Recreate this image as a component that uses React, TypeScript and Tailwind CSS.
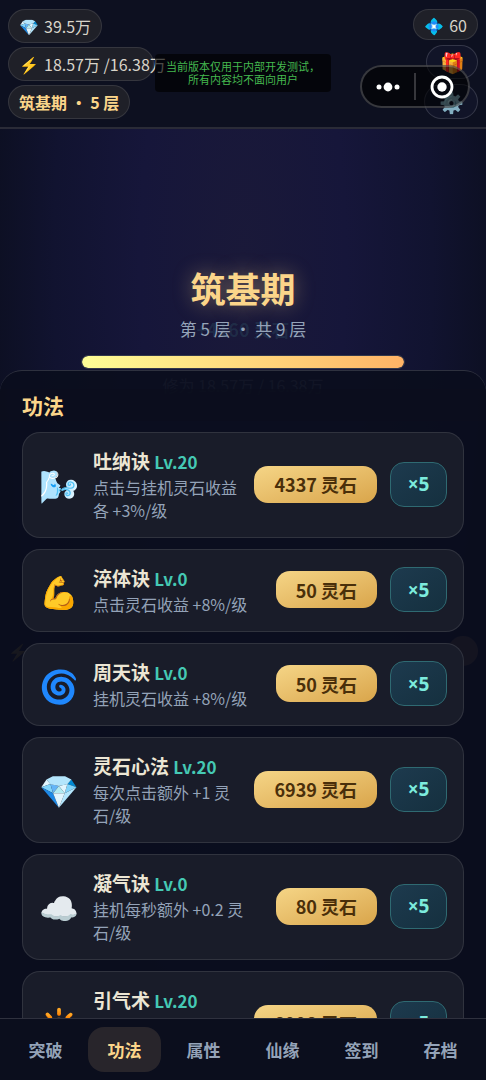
import type { ReactNode } from "react";

interface Skill {
  icon: string;
  name: string;
  level: number;
  desc: string;
  cost: number;
}

const skills: Skill[] = [
  { icon: "🌬️", name: "吐纳诀", level: 20, desc: "点击与挂机灵石收益各 +3%/级", cost: 4337 },
  { icon: "💪", name: "淬体诀", level: 0, desc: "点击灵石收益 +8%/级", cost: 50 },
  { icon: "🌀", name: "周天诀", level: 0, desc: "挂机灵石收益 +8%/级", cost: 50 },
  { icon: "💎", name: "灵石心法", level: 20, desc: "每次点击额外 +1 灵石/级", cost: 6939 },
  { icon: "☁️", name: "凝气诀", level: 0, desc: "挂机每秒额外 +0.2 灵石/级", cost: 80 },
  { icon: "🔆", name: "引气术", level: 20, desc: "挂机每秒额外 +1 灵石/级", cost: 8998 },
];

const tabs = ["突破", "功法", "属性", "仙缘", "签到", "存档"];

const Pill = ({ children, className = "" }: { children: ReactNode; className?: string }) => (
  <div
    className={`flex items-center gap-[5px] rounded-full border border-white/10 bg-[#1f2028] px-[10px] text-[16px] whitespace-nowrap ${className}`}
  >
    {children}
  </div>
);

const Header = () => (
  <header className="relative flex shrink-0 items-start justify-between border-b-2 border-[#2a2b37] bg-[#0d1020] px-2 pt-[9px] pb-2">
    <div className="flex flex-col items-start gap-1">
      <Pill className="h-[34px]">
        <span>💎</span>
        <span>39.5万</span>
      </Pill>
      {/* the cap runs past the end of its pill */}
      <Pill className="h-[34px] w-[146px]">
        <span>⚡</span>
        <span>18.57万 /16.38万</span>
      </Pill>
      <Pill className="h-[34px] font-bold text-[#fbd58a]">筑基期 · 5 层</Pill>
    </div>

    <div className="flex flex-col items-end gap-[5px]">
      <Pill className="h-[31px]">
        <span>💠</span>
        <span>60</span>
      </Pill>
      <button
        type="button"
        aria-label="礼包"
        className="flex h-[34px] w-[52px] items-center justify-center rounded-full border border-white/15 bg-[#111428] text-[20px] leading-none"
      >
        🎁
      </button>
      <button
        type="button"
        aria-label="设置"
        className="flex h-[35px] w-[54px] items-center justify-center rounded-full border border-white/15 bg-[#111428] text-[20px] leading-none"
      >
        ⚙️
      </button>
    </div>

    <p className="absolute top-[54px] left-[155px] w-[176px] rounded bg-black/65 py-[6px] text-center text-[11px] leading-[13px] text-[#45b84f]">
      当前版本仅用于内部开发测试，
      <br />
      所有内容均不面向用户
    </p>

    {/* host app capsule */}
    <div className="absolute top-[65px] right-[16px] flex h-[43px] w-[110px] items-center rounded-full border-2 border-white/20 bg-black/60">
      <button type="button" aria-label="更多" className="flex flex-1 justify-center">
        <svg width="24" height="10" viewBox="0 0 24 10" fill="#fff">
          <circle cx="3" cy="5" r="2.5" />
          <circle cx="12" cy="5" r="4.4" />
          <circle cx="21" cy="5" r="2.5" />
        </svg>
      </button>
      <span className="h-[27px] w-[2px] bg-white/20" />
      <button type="button" aria-label="关闭" className="flex flex-1 justify-center">
        <svg width="24" height="24" viewBox="0 0 24 24">
          <circle cx="12" cy="12" r="10" fill="none" stroke="#fff" strokeWidth="2.8" />
          <circle cx="12" cy="12" r="4.7" fill="#fff" />
        </svg>
      </button>
    </div>
  </header>
);

const Realm = () => (
  <section className="flex h-full flex-col items-center bg-[radial-gradient(ellipse_at_50%_15%,#1a1939_0%,#16163a_30%,#111330_55%,#0b0e1d_80%)] pt-[134px]">
    <h1 className="text-[35px] leading-[50px] font-bold text-[#fbd58a] [text-shadow:0_0_20px_rgba(251,213,138,0.4)]">
      筑基期
    </h1>
    <div className="relative mt-[3px] text-[17px] leading-[26px] text-[#94a3b8]">
      <span className="absolute inset-x-0 text-center text-[18px] font-bold text-[#5eead4]/10">+4160 灵石</span>
      <span className="relative">第 5 层 · 共 9 层</span>
    </div>
    <div className="mt-[13px] h-[14px] w-2/3 rounded-full border border-[#33384a] bg-gradient-to-r from-[#fdfd96] to-[#ffb366] bg-clip-padding" />
    <p className="mt-[4px] text-[16px] leading-[24px] text-[#94a3b8]">修为 18.57万 / 16.38万</p>
    <div className="mt-[239px] flex w-full items-center justify-between px-2 text-[16px]">
      <span>⚡</span>
      <span className="size-[30px] rounded-full bg-[#c48a5a]" />
    </div>
  </section>
);

const SkillCard = ({ icon, name, level, desc, cost }: Skill) => (
  <li className="flex items-center rounded-[18px] border border-white/10 bg-[#191c29] pt-[13px] pr-4 pb-[15px] pl-[15px]">
    <span className="w-[42px] shrink-0 text-center text-[32px] leading-[40px]">{icon}</span>
    <div className="ml-[13px] min-w-0 flex-1">
      <h3 className="text-[19px] leading-[29px] font-bold text-[#ece6d4]">
        {name} <span className="text-[17px] text-[#45c9b4]">Lv.{level}</span>
      </h3>
      <p className="text-[16px] leading-[23px] text-[#94a3b8]">{desc}</p>
    </div>
    <button
      type="button"
      className="ml-3 h-[37px] shrink-0 rounded-[14px] bg-gradient-to-br from-[#f5d586] to-[#d9a54a] px-[20px] text-[18px] leading-[26px] font-bold whitespace-nowrap text-[#4a2f0a]"
    >
      {cost} 灵石
    </button>
    <button
      type="button"
      className="ml-[13px] h-[45px] w-[57px] shrink-0 rounded-[14px] border border-[#2f6a72] bg-gradient-to-br from-[#1d3a4e] to-[#15303f] font-['Noto_Sans',sans-serif] text-[19px] leading-[26px] font-bold text-[#7cebdc]"
    >
      ×5
    </button>
  </li>
);

const SkillSheet = () => (
  <section className="absolute inset-x-0 bottom-0 flex h-[60vh] flex-col overflow-hidden rounded-t-[22px] border-t border-white/15 bg-[#0b0e1d]/95 px-[22px]">
    <div className="-mx-[22px] mt-[18px] bg-[#0b0e1d]/80 px-[22px]">
      <h2 className="text-[21px] leading-[32px] font-bold text-[#fbd58a]">功法</h2>
    </div>
    <ul className="mt-[11px] flex min-h-0 flex-1 flex-col gap-[11px] overflow-hidden">
      {skills.map((skill) => (
        <SkillCard key={skill.name} {...skill} />
      ))}
    </ul>
  </section>
);

const TabBar = () => (
  <nav className="flex shrink-0 border-t border-white/15 bg-[#0b0e1d] px-[6px] py-2">
    {tabs.map((tab) => (
      <button
        key={tab}
        type="button"
        className={`mx-[3px] h-[45px] flex-1 rounded-[16px] text-[17px] leading-[24px] font-bold ${
          tab === "功法" ? "bg-[#28252b] text-[#fbd58a]" : "text-[#94a3b8]"
        }`}
      >
        {tab}
      </button>
    ))}
  </nav>
);

const App = () => (
  <div className="flex h-screen flex-col overflow-hidden bg-[#0b0e1d] font-['Noto_Sans_CJK_SC',sans-serif] text-[17px] text-[#d8d4ca]">
    <Header />
    <main className="relative min-h-0 flex-1 overflow-hidden">
      <Realm />
      <SkillSheet />
    </main>
    <TabBar />
  </div>
);

export default App;
